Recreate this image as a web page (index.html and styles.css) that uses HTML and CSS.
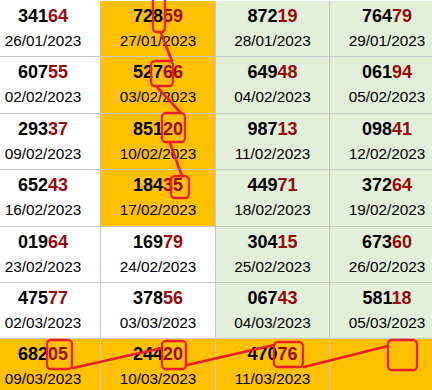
FILE: index.html
```html
<!DOCTYPE html>
<html>
<head>
<meta charset="utf-8">
<link rel="stylesheet" href="styles.css">
</head>
<body>
<div class="sheet">
  <div class="grid">
    <div class="cell"><div class="num">341<span class="hl">64</span></div><div class="date">26/01/2023</div></div>
    <div class="cell yellow"><div class="num">728<span class="hl">59</span></div><div class="date">27/01/2023</div></div>
    <div class="cell green"><div class="num">872<span class="hl">19</span></div><div class="date">28/01/2023</div></div>
    <div class="cell green"><div class="num">764<span class="hl">79</span></div><div class="date">29/01/2023</div></div>

    <div class="cell"><div class="num">607<span class="hl">55</span></div><div class="date">02/02/2023</div></div>
    <div class="cell yellow"><div class="num">527<span class="hl">66</span></div><div class="date">03/02/2023</div></div>
    <div class="cell green"><div class="num">649<span class="hl">48</span></div><div class="date">04/02/2023</div></div>
    <div class="cell green"><div class="num">061<span class="hl">94</span></div><div class="date">05/02/2023</div></div>

    <div class="cell"><div class="num">293<span class="hl">37</span></div><div class="date">09/02/2023</div></div>
    <div class="cell yellow"><div class="num">851<span class="hl">20</span></div><div class="date">10/02/2023</div></div>
    <div class="cell green"><div class="num">987<span class="hl">13</span></div><div class="date">11/02/2023</div></div>
    <div class="cell green"><div class="num">098<span class="hl">41</span></div><div class="date">12/02/2023</div></div>

    <div class="cell"><div class="num">652<span class="hl">43</span></div><div class="date">16/02/2023</div></div>
    <div class="cell yellow"><div class="num">184<span class="hl">35</span></div><div class="date">17/02/2023</div></div>
    <div class="cell green"><div class="num">449<span class="hl">71</span></div><div class="date">18/02/2023</div></div>
    <div class="cell green"><div class="num">372<span class="hl">64</span></div><div class="date">19/02/2023</div></div>

    <div class="cell"><div class="num">019<span class="hl">64</span></div><div class="date">23/02/2023</div></div>
    <div class="cell"><div class="num">169<span class="hl">79</span></div><div class="date">24/02/2023</div></div>
    <div class="cell green"><div class="num">304<span class="hl">15</span></div><div class="date">25/02/2023</div></div>
    <div class="cell green"><div class="num">673<span class="hl">60</span></div><div class="date">26/02/2023</div></div>

    <div class="cell"><div class="num">475<span class="hl">77</span></div><div class="date">02/03/2023</div></div>
    <div class="cell"><div class="num">378<span class="hl">56</span></div><div class="date">03/03/2023</div></div>
    <div class="cell green"><div class="num">067<span class="hl">43</span></div><div class="date">04/03/2023</div></div>
    <div class="cell green"><div class="num">581<span class="hl">18</span></div><div class="date">05/03/2023</div></div>

    <div class="cell yellow"><div class="num">682<span class="hl">05</span></div><div class="date">09/03/2023</div></div>
    <div class="cell yellow"><div class="num">244<span class="hl">20</span></div><div class="date">10/03/2023</div></div>
    <div class="cell yellow"><div class="num">470<span class="hl">76</span></div><div class="date">11/03/2023</div></div>
    <div class="cell yellow"></div>
  </div>
  <svg class="marks" width="432" height="390" viewBox="0 0 432 390">
    <g fill="none" stroke="#e8202a" stroke-width="2.3" stroke-linecap="round">
      <rect x="153" y="-4" width="12" height="36" rx="4"/>
      <rect x="151" y="61" width="22" height="25" rx="4"/>
      <rect x="162" y="113" width="23" height="29" rx="4"/>
      <rect x="171" y="176" width="18" height="22" rx="4"/>
      <rect x="47" y="340" width="25" height="29" rx="4"/>
      <rect x="162" y="341" width="24" height="28" rx="4"/>
      <rect x="274" y="342" width="29" height="25" rx="4"/>
      <rect x="388" y="340" width="29" height="30" rx="4"/>
    </g>
    <g fill="none" stroke="#e8202a" stroke-width="2.7" stroke-linecap="round">
      <line x1="161" y1="33" x2="172" y2="61"/>
      <line x1="157" y1="87" x2="181" y2="113"/>
      <line x1="170" y1="143" x2="182" y2="176"/>
      <line x1="73" y1="368" x2="162" y2="348"/>
      <line x1="187" y1="365" x2="274" y2="345"/>
      <line x1="304" y1="367" x2="388" y2="346"/>
    </g>
  </svg>
</div>
</body>
</html>
```
FILE: styles.css
```css
html, body {
  margin: 0;
  padding: 0;
  background: #ffffff;
}
body {
  width: 432px;
  height: 390px;
  overflow: hidden;
  font-family: "Liberation Sans", Arial, sans-serif;
}
.sheet {
  position: relative;
  width: 432px;
  height: 390px;
  overflow: hidden;
}
.grid {
  display: grid;
  grid-template-columns: 114px 114px 113px 114px;
  grid-template-rows: 55px 56px 55px 56px 55px 55px 60px;
  gap: 1px;
  background: #c8c8c8;
  margin: 1px 0 0 -14px;
  width: max-content;
}
.cell {
  background: #ffffff;
  display: flex;
  flex-direction: column;
  align-items: center;
  padding-top: 5px;
  box-sizing: border-box;
}
.cell.yellow { background: #ffc000; }
.cell.green { background: #e2efda; }
.num {
  font-weight: bold;
  font-size: 18px;
  line-height: 20px;
  color: #000;
}
.hl { color: #990a0a; }
.date {
  font-size: 15.33px;
  line-height: 20px;
  margin-top: 5px;
  color: #000;
}
.marks {
  position: absolute;
  left: 0;
  top: 0;
  pointer-events: none;
}
```
